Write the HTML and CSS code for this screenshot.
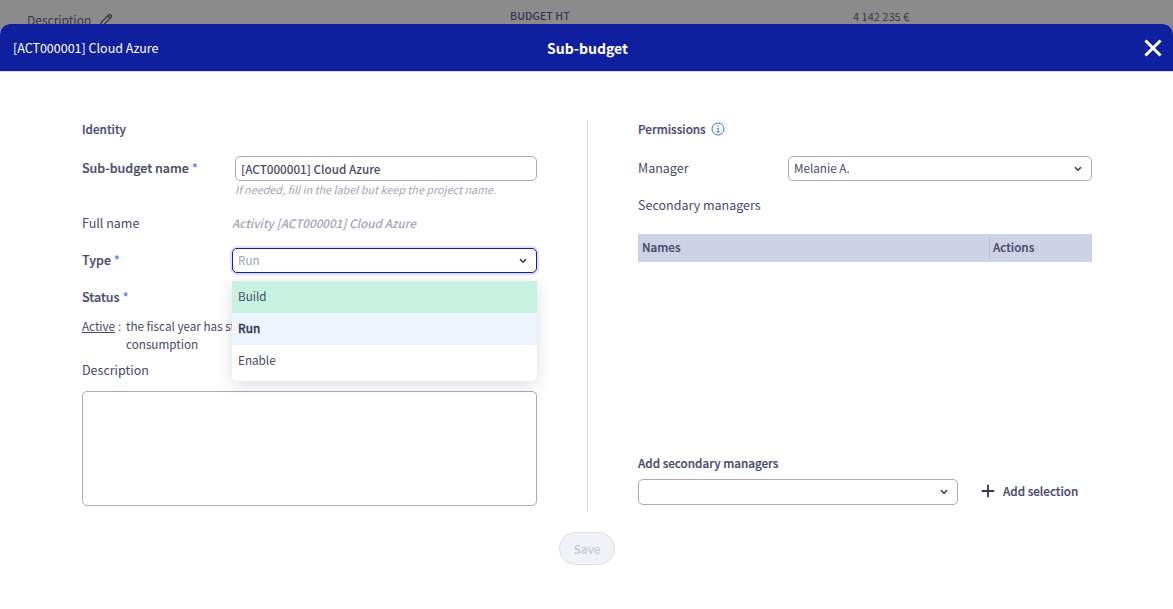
FILE: index.html
```html
<!DOCTYPE html>
<html lang="en">
<head>
<meta charset="utf-8">
<title>Sub-budget</title>
<link rel="stylesheet" href="styles.css">
</head>
<body>
<div class="backdrop">
  <div class="behind-col behind-desc">Description
    <svg class="pencil" width="14" height="14" viewBox="0 0 14 14" fill="none" stroke="#33384f" stroke-width="1.300"><path d="M1.500 12.500l.8-3.200L9.800 1.800a1.200 1.200 0 0 1 1.700 0l.7.7a1.200 1.200 0 0 1 0 1.700L4.700 11.700z"/><path d="M8.800 2.800l2.400 2.400"/></svg>
  </div>
  <div class="behind-col behind-budget">BUDGET HT</div>
  <div class="behind-col behind-value">4 142 235 €</div>
</div>
<div class="modal">
  <header class="modal-head">
    <div class="head-left">[ACT000001] Cloud Azure</div>
    <div class="head-title">Sub-budget</div>
    <div class="head-right">
      <svg width="18" height="18" viewBox="0 0 18 18" stroke="#fff" stroke-width="3" stroke-linecap="square"><path d="M2.500 2.500l13 13M15.500 2.500l-13 13"/></svg>
    </div>
  </header>
  <div class="modal-body">
    <section class="col-left">
      <h3 class="section-title">Identity</h3>
      <div class="row row-name">
        <label class="label strong">Sub-budget name <span class="req">*</span></label>
        <div class="field-name">
          <div class="input input-name">[ACT000001] Cloud Azure</div>
          <div class="hint">If needed, fill in the label but keep the project name.</div>
        </div>
      </div>
      <div class="row row-full">
        <span class="label">Full name</span>
        <span class="fullname">Activity [ACT000001] Cloud Azure</span>
      </div>
      <div class="row row-type">
        <label class="label strong">Type <span class="req">*</span></label>
        <div class="type-wrap">
          <div class="input input-type"><span class="placeholder">Run</span>
            <svg class="chev" width="8" height="6" viewBox="0 0 8 6" fill="none" stroke="#33384f" stroke-width="1.500"><path d="M1 1.200l3 3 3-3"/></svg>
          </div>
          <ul class="menu">
            <li class="opt opt-build">Build</li>
            <li class="opt opt-run">Run</li>
            <li class="opt">Enable</li>
          </ul>
        </div>
      </div>
      <div class="label strong status-label">Status <span class="req">*</span></div>
      <div class="status-text">
        <span class="active-term">Active</span><span class="colon">:</span>
        <span class="status-desc">the fiscal year has started, budget is open to consumption</span>
      </div>
      <div class="label desc-label">Description</div>
      <div class="textarea"></div>
    </section>
    <div class="divider"></div>
    <section class="col-right">
      <h3 class="section-title perm">Permissions
        <svg class="info" width="14" height="14" viewBox="0 0 14 14" fill="none" stroke="#3b6ff0"><circle cx="7" cy="7" r="6"/><path d="M5.800 6.300H7.200V10M5.700 10h3" stroke-width="1"/><path d="M7 3.500v1.200" stroke-width="1.200"/></svg>
      </h3>
      <div class="row row-manager">
        <span class="label manager-label">Manager</span>
        <div class="input input-manager">Melanie A.
          <svg class="chev" width="8" height="6" viewBox="0 0 8 6" fill="none" stroke="#33384f" stroke-width="1.500"><path d="M1 1.200l3 3 3-3"/></svg>
        </div>
      </div>
      <div class="label secondary">Secondary managers</div>
      <div class="table-head">
        <div class="th th-names">Names</div>
        <div class="th th-actions">Actions</div>
      </div>
      <div class="spacer"></div>
      <div class="add-label">Add secondary managers</div>
      <div class="row add-row">
        <div class="input input-add">
          <svg class="chev" width="8" height="6" viewBox="0 0 8 6" fill="none" stroke="#33384f" stroke-width="1.500"><path d="M1 1.200l3 3 3-3"/></svg>
        </div>
        <div class="add-btn">
          <svg width="14" height="14" viewBox="0 0 14 14" stroke="#33384f" stroke-width="1.800"><path d="M7 .8v12.400M.8 7h12.400"/></svg>
          Add selection
        </div>
      </div>
    </section>
  </div>
  <div class="foot"><button class="save" type="button">Save</button></div>
</div>
</body>
</html>
```
FILE: styles.css
```css
* { box-sizing: border-box; }
html, body { margin: 0; height: 100%; overflow: hidden; }
body {
  background: #8b8b8b;
  color: #474b6a;
  font-family: "Noto Sans CJK JP", "Noto Sans", sans-serif;
  font-size: 12.500px;
  line-height: 18px;
  display: flex;
  flex-direction: column;
}
.backdrop { height: 24px; flex: none; display: flex; color: #33384f; overflow: hidden; }
.behind-col { padding-top: 7px; white-space: nowrap; }
.behind-desc { margin-left: 27px; width: 483px; padding-top: 11px; font-size: 12px; }
.pencil { margin-left: 5px; vertical-align: -2px; }
.behind-budget { width: 343px; font-size: 10.700px; font-weight: 500; }
.behind-value { font-size: 11px; }

.modal { flex: 1; background: #fff; border-radius: 10px 10px 0 0; display: flex; flex-direction: column; }
.modal-head {
  height: 48px; flex: none; background: #0f1f9e; border-bottom: 1px solid #d5d8ee;
  border-radius: 10px 10px 0 0; color: #fff;
  display: grid; grid-template-columns: 1fr auto 1fr; align-items: center; padding: 0 11px 0 13px;
}
.head-left { font-size: 12.500px; }
.head-title { font-size: 14px; font-weight: 700; }
.head-right { display: flex; justify-content: flex-end; height: 18px; }

.modal-body { display: flex; height: 392px; margin-top: 48px; padding-left: 82px; flex: none; }
.col-left { width: 455px; flex: none; display: flex; flex-direction: column; }
.divider { width: 1px; background: #d4d5da; margin-left: 50px; flex: none; }
.col-right { width: 454px; margin-left: 50px; flex: none; display: flex; flex-direction: column; }

.section-title { margin: 0 0 1px; font-size: 11.700px; font-weight: 500; line-height: 18px; height: 18px; -webkit-text-stroke: .2px; }
.perm { display: flex; align-items: center; gap: 5px; }
.info { flex: none; }
.row { display: flex; align-items: flex-start; }
.label { white-space: nowrap; }
.strong { font-weight: 500; -webkit-text-stroke: .2px; }
.req { color: #4f7df0; -webkit-text-stroke: 0; }

.input {
  height: 25px; border: 1px solid #a9a9b8; border-radius: 5px; background: #fff;
  display: flex; align-items: center; justify-content: space-between; padding: 0 9px 0 5px;
  font-size: 11.700px;
}
.chev { flex: none; }

.row-name { margin-top: 17px; }
.row-name .label { width: 153px; padding-top: 3px; flex: none; }
.field-name { width: 302px; }
.input-name { font-weight: 500; }
.hint { font-size: 10.800px; font-style: italic; color: #a2a4b6; margin-top: -1px; line-height: 18px; }

.row-full { margin-top: 16px; height: 18px; }
.row-full .label { width: 150px; flex: none; }
.fullname { font-style: italic; font-weight: 500; color: #a2a4b6; font-size: 11.700px; line-height: 17px; }

.row-type { margin-top: 16px; position: relative; }
.row-type .label { width: 150px; flex: none; padding-top: 3px; }
.type-wrap { width: 305px; position: relative; }
.input-type { border-color: #0f1f9e; box-shadow: 0 0 0 2px #dfe2f6; border-width: 1.500px; padding-bottom: 2px; }
.input-type .chev { margin-top: 2px; }
.placeholder { color: #a2a4b6; }
.menu {
  position: absolute; top: 33px; left: 0; right: 0; height: 100px; margin: 0; padding: 0; list-style: none; z-index: 5;
  background: #fff; border-radius: 0 0 6px 6px; box-shadow: 0 4px 16px rgba(40, 45, 90, .16);
}
.opt { height: 32px; padding: 0 6px; line-height: 30px; font-size: 11.700px; }
.opt-build { background: #c7f2df; }
.opt-run { background: #eef4fd; font-weight: 500; color: #33384f; -webkit-text-stroke: .3px; }

.status-label { margin-top: 15px; }
.status-text { position: relative; margin-top: 11px; padding-left: 44px; font-size: 11.700px; line-height: 18px; width: 420px; }
.active-term { position: absolute; left: 0; text-decoration: underline; }
.colon { position: absolute; left: 36px; }
.status-desc { display: block; width: 290px; }
.desc-label { margin-top: 8px; }
.textarea { height: 115px; margin-top: 12px; border: 1px solid #a9a9b8; border-radius: 5px; }

.row-manager { margin-top: 17px; }
.manager-label { width: 150px; flex: none; padding-top: 3px; }
.input-manager { width: 304px; padding-bottom: 2px; }
.input-manager .chev { margin-top: 2px; }
.secondary { margin-top: 15px; }
.table-head { margin-top: 20px; height: 28px; background: #ced2e6; display: flex; align-items: center; flex: none; }
.th { font-size: 11.700px; font-weight: 500; line-height: 22px; height: 24px; -webkit-text-stroke: .2px; }
.th-names { width: 351px; padding-left: 4px; }
.th-actions { border-left: 1px solid #bfc3da; padding-left: 3px; flex: 1; }
.spacer { flex: 1; }
.add-label { font-size: 11.700px; font-weight: 500; line-height: 18px; -webkit-text-stroke: .2px; }
.add-row { margin-top: 7px; margin-bottom: 7px; align-items: center; }
.input-add { width: 320px; justify-content: flex-end; height: 26px; padding-right: 9px; }
.add-btn { margin-left: 23px; padding-bottom: 2px; display: flex; align-items: center; gap: 8px; font-size: 11.700px; font-weight: 500; -webkit-text-stroke: .2px; }

.foot { display: flex; justify-content: center; margin-top: 20px; padding-left: 1px; }
.save {
  width: 56px; height: 33px; border-radius: 17px; border: 1px solid #dcdde6; background: #f1f2f8;
  color: #c6c7d2; font: 500 11.700px "Noto Sans CJK JP", "Noto Sans", sans-serif; padding: 0;
}
```
